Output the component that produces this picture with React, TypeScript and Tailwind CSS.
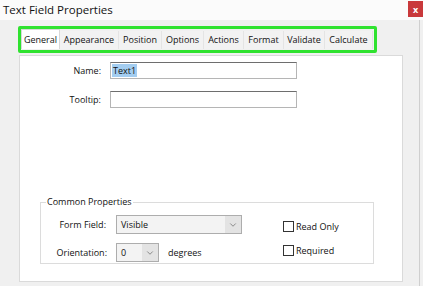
import { ChevronDown } from "lucide-react";

const tabs = [
  { label: "General", w: "w-[39px]" },
  { label: "Appearance", w: "w-[59px]" },
  { label: "Position", w: "w-[43px]" },
  { label: "Options", w: "w-[42px]" },
  { label: "Actions", w: "w-[40px]" },
  { label: "Format", w: "w-[40px]" },
  { label: "Validate", w: "w-[41px]" },
  { label: "Calculate", w: "w-[48px]" },
];

function Select({ value, className }: { value: string; className: string }) {
  return (
    <div
      className={`flex h-[19px] items-stretch border border-[#adadad] bg-[#f3f3f3] ${className}`}
    >
      <div className="flex flex-1 items-center pl-[4px]">{value}</div>
      <div className="flex w-[16px] items-center justify-center bg-[#e3e3e3] text-[#555]">
        <ChevronDown size={10} strokeWidth={1.5} />
      </div>
    </div>
  );
}

function Check({ label, className }: { label: string; className: string }) {
  return (
    <div className={`flex items-center gap-[2px] ${className}`}>
      <div className="h-[11px] w-[11px] border border-[#333] bg-white" />
      <span>{label}</span>
    </div>
  );
}

export default function App() {
  return (
    <div
      className="relative h-[286px] w-[423px] overflow-hidden bg-[#f0f0f0] text-[9px] text-[#111]"
      style={{ fontFamily: '"Open Sans", "Noto Sans", sans-serif' }}
    >
      {/* title bar */}
      <div className="flex h-[20px] items-start justify-between bg-[#fbfbfb]">
        <span className="pl-[3px] pt-[1px] text-[11.5px]">Text Field Properties</span>
        <div className="mt-[1px] flex h-[16px] w-[15px] items-center justify-center bg-[#c9393b] text-[9px] leading-none font-bold text-white">
          x
        </div>
      </div>

      {/* tabs, highlighted */}
      <div className="ml-[18px] mt-[6px] flex h-[27px] w-[359px] items-end rounded-[2px] border-[3px] border-[#2fe22f] pb-[1px]">
        {tabs.map((t, i) => (
          <div
            key={t.label}
            className={`flex items-center justify-center ${t.w} ${
              i === 0
                ? "h-[20px] border border-b-0 border-[#d8d8d8] bg-white"
                : "h-[18px] border-r border-[#e4e4e4] bg-[#f2f2f2]"
            }`}
          >
            {t.label}
          </div>
        ))}
      </div>

      {/* panel */}
      <div className="ml-[19px] mt-[2px] flex h-[227px] w-[384px] flex-col border border-[#dadada] bg-white">
        <div className="mt-[6px] flex items-center">
          <span className="w-[81px] text-right">Name:</span>
          <div className="ml-[9px] flex h-[17px] w-[187px] items-center border border-[#b5b5b5] border-t-[#6e6e6e] pl-[1px]">
            <span className="bg-[#a3cdf0] px-[1px] leading-[13px]">Text1</span>
          </div>
        </div>
        <div className="mt-[12px] flex items-center">
          <span className="w-[81px] text-right">Tooltip:</span>
          <div className="ml-[9px] h-[17px] w-[187px] border border-[#b5b5b5] border-t-[#6e6e6e]" />
        </div>

        <fieldset className="ml-[20px] mt-[88px] h-[68px] w-[334px] border border-[#dcdcdc] px-0">
          <legend className="ml-[5px] px-[1px] leading-[12px]">Common Properties</legend>
          <div className="mt-[7px] flex items-center">
            <span className="w-[65px] text-right">Form Field:</span>
            <Select value="Visible" className="ml-[10px] w-[126px]" />
            <Check label="Read Only" className="ml-[41px] translate-y-[2px]" />
          </div>
          <div className="mt-[9px] flex items-center">
            <span className="w-[66px] text-right">Orientation:</span>
            <div className="ml-[9px] flex w-[126px] items-center">
              <Select value="0" className="w-[43px]" />
              <span className="ml-[9px]">degrees</span>
            </div>
            <Check label="Required" className="ml-[41px] -translate-y-[2px]" />
          </div>
        </fieldset>
      </div>

      <div className="absolute right-[3px] top-[20px] h-[266px] w-px bg-[#cfcfcf]" />
    </div>
  );
}
